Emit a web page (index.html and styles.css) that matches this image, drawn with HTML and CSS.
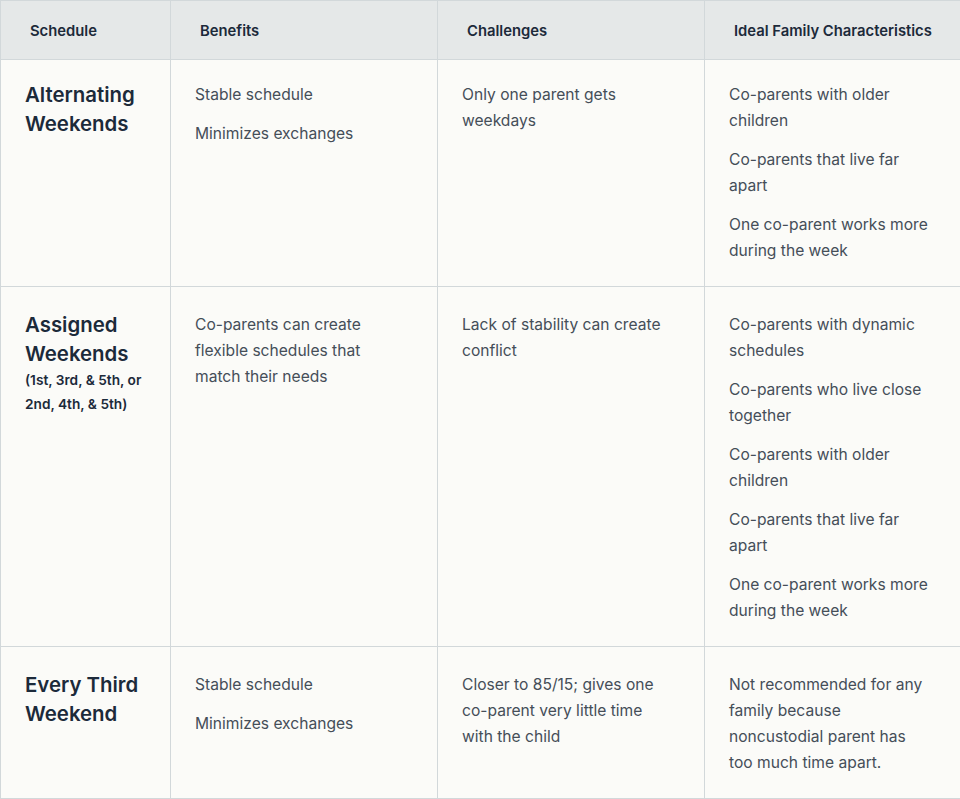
FILE: index.html
```html
<!DOCTYPE html>
<html lang="en">
<head>
<meta charset="utf-8">
<title>Weekend schedules</title>
<link rel="stylesheet" href="styles.css">
</head>
<body>
<table class="schedules">
  <colgroup>
    <col class="c1"><col class="c2"><col class="c3"><col class="c4">
  </colgroup>
  <thead>
    <tr>
      <th>Schedule</th>
      <th>Benefits</th>
      <th>Challenges</th>
      <th>Ideal Family Characteristics</th>
    </tr>
  </thead>
  <tbody>
    <tr>
      <td class="name"><h3>Alternating Weekends</h3></td>
      <td><div class="txt"><p>Stable schedule</p><p>Minimizes exchanges</p></div></td>
      <td><div class="txt"><p>Only one parent gets weekdays</p></div></td>
      <td><div class="txt"><p>Co-parents with older children</p><p>Co-parents that live far apart</p><p>One co-parent works more during the week</p></div></td>
    </tr>
    <tr>
      <td class="name"><h3>Assigned Weekends</h3><span class="sub">(1st, 3rd, &amp; 5th, or 2nd, 4th, &amp; 5th)</span></td>
      <td><div class="txt"><p>Co-parents can create flexible schedules that match their needs</p></div></td>
      <td><div class="txt"><p>Lack of stability can create conflict</p></div></td>
      <td><div class="txt"><p>Co-parents with dynamic schedules</p><p>Co-parents who live close together</p><p>Co-parents with older children</p><p>Co-parents that live far apart</p><p>One co-parent works more during the week</p></div></td>
    </tr>
    <tr>
      <td class="name"><h3>Every Third Weekend</h3></td>
      <td><div class="txt"><p>Stable schedule</p><p>Minimizes exchanges</p></div></td>
      <td><div class="txt"><p>Closer to 85/15; gives one co-parent very little time with the child</p></div></td>
      <td><div class="txt"><p>Not recommended for any family because noncustodial parent has too much time apart.</p></div></td>
    </tr>
  </tbody>
</table>
</body>
</html>
```
FILE: styles.css
```css
html, body {
  margin: 0;
  padding: 0;
  background: #fbfbf8;
}
body {
  font-family: Inter, "Noto Sans", sans-serif;
  color: #1c2a3a;
}
.schedules {
  width: 960px;
  border-collapse: collapse;
  table-layout: fixed;
  background: #fbfbf8;
}
.c1 { width: 170px; }
.c2 { width: 267px; }
.c3 { width: 267px; }
.c4 { width: 256px; }
.schedules th,
.schedules td {
  border: 1px solid #d2d8da;
  vertical-align: top;
  text-align: left;
}
.schedules th {
  background: #e5e8e8;
  height: 57px;
  padding: 1px 6px 0 29px;
  vertical-align: middle;
  font-size: 14.8px;
  font-weight: 600;
  color: #1c2a3a;
}
.schedules td {
  padding: 25px 10px 22px 24px;
  font-size: 15.6px;
  line-height: 26px;
  color: #454e58;
}
.schedules tbody tr:first-child td {
  padding-top: 22px;
}
.txt {
  max-width: 202px;
}
.txt p {
  margin: 0 0 13px;
}
.txt p:last-child {
  margin-bottom: 0;
}
.schedules td.name {
  padding-left: 24px;
  padding-right: 8px;
}
.name h3 {
  margin: -2px 0 0;
  font-size: 20.4px;
  line-height: 29px;
  font-weight: 600;
  color: #1c2a3a;
}
.name .sub {
  display: block;
  font-size: 13.7px;
  line-height: 24px;
  font-weight: 600;
  color: #1c2a3a;
  max-width: 128px;
}
```
